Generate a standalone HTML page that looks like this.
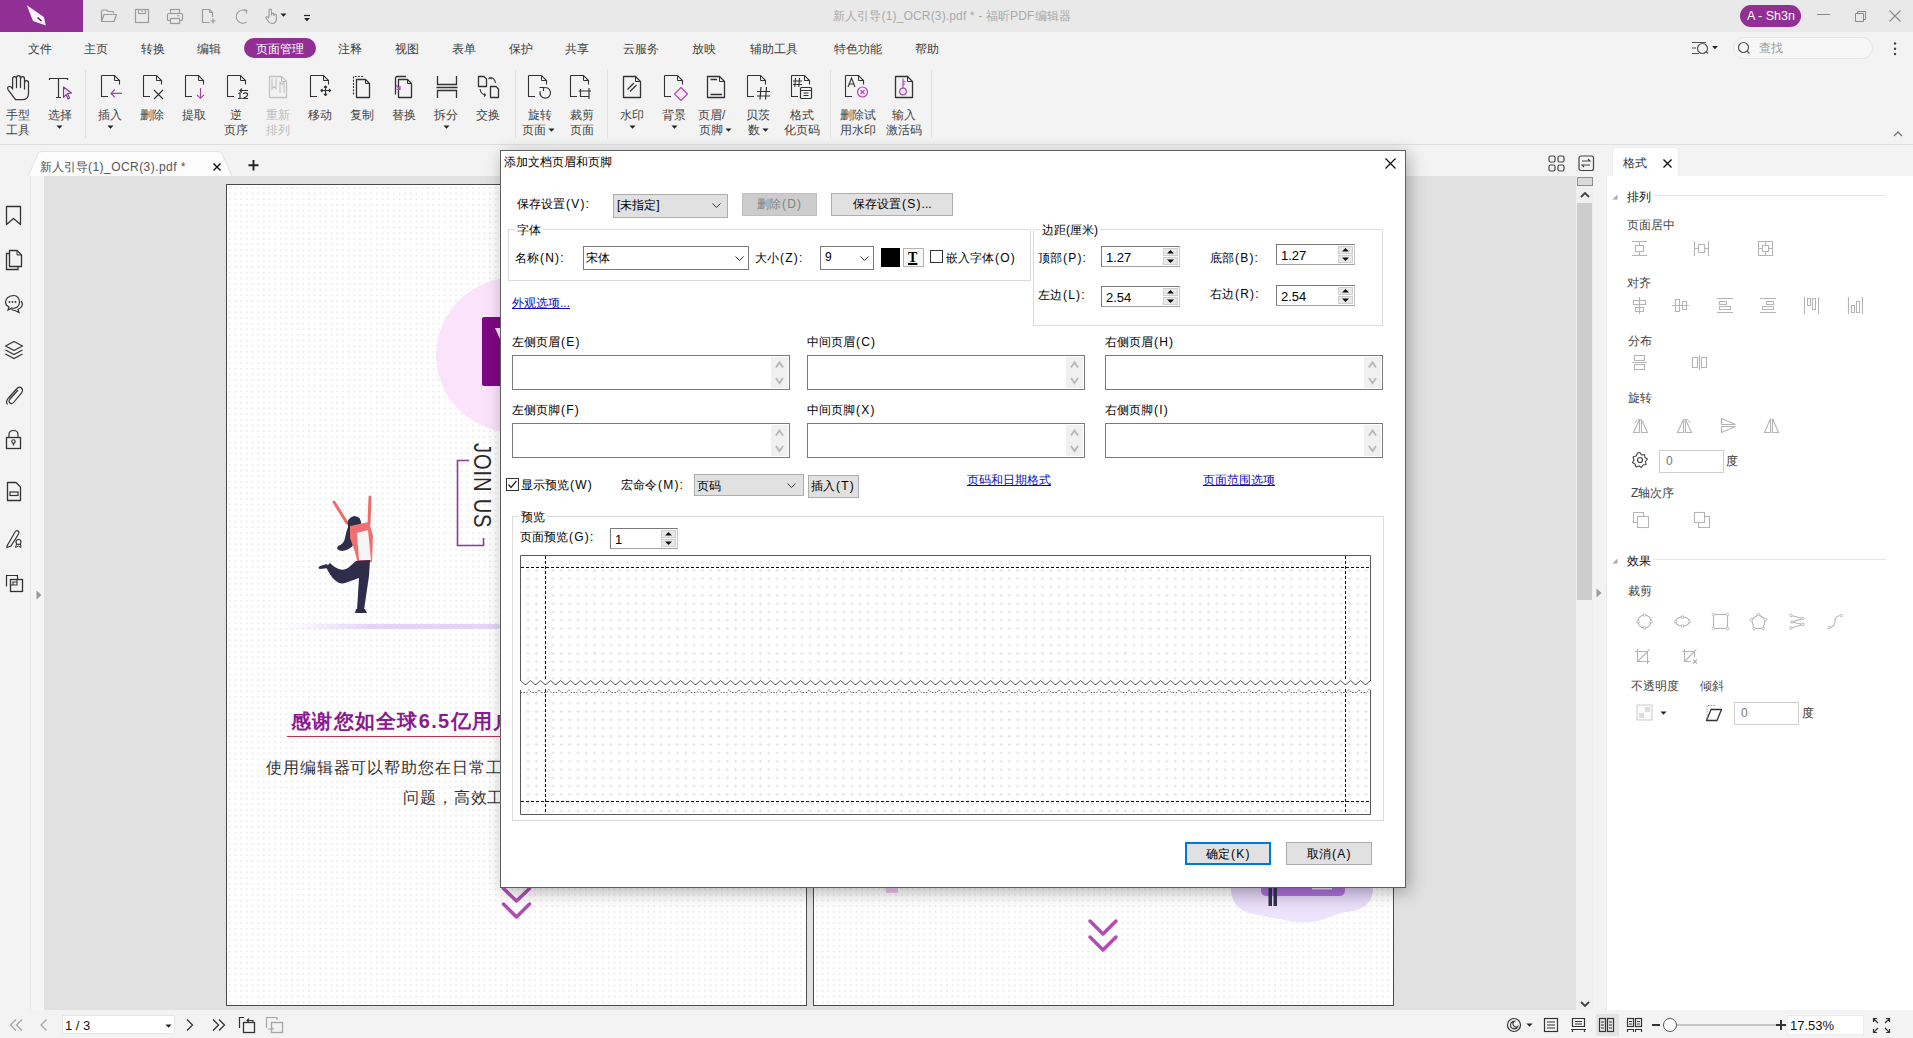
<!DOCTYPE html>
<html><head><meta charset="utf-8">
<style>
*{box-sizing:border-box;margin:0;padding:0}
html,body{width:1913px;height:1038px;overflow:hidden;background:#f3f3f3;font-family:"Liberation Sans",sans-serif;font-size:12px;color:#333}
.a{position:absolute}
.t{position:absolute;white-space:nowrap;line-height:1}
svg{position:absolute;overflow:visible}
</style></head><body>

<div class="a" style="left:0px;top:0px;width:1913px;height:32px;background:#e9e9e9"></div>
<div class="a" style="left:0px;top:0px;width:83px;height:32px;background:#922f94"></div>
<svg style="left:20px;top:0px" width="30" height="30" viewBox="0 0 30 30"><path d="M6.8 5.2L23.8 17L25.9 25.6L13 21Z" fill="#fff3fd"/><path d="M17.5 17.5L21.5 21" stroke="#5a1a5c" stroke-width="1.5"/></svg>
<svg style="left:100px;top:8px" width="18" height="16" viewBox="0 0 18 16"><path d="M1.5 13.5V3.5Q1.5 2 3 2H6.5L8 3.5H13.5V5.5 M1.5 13.5L4 6.5H16.5L14 13.5Z" stroke="#9b9b9b" stroke-width="1.2" fill="none" stroke-linejoin="round"/></svg>
<svg style="left:134px;top:8px" width="16" height="16" viewBox="0 0 16 16"><rect x="1.5" y="1.5" width="13" height="13" stroke="#9b9b9b" stroke-width="1.2" fill="none"/><rect x="4.5" y="1.5" width="7" height="4" stroke="#9b9b9b" stroke-width="1.1" fill="none"/><path d="M7 3.2h2" stroke="#9b9b9b"/></svg>
<svg style="left:166px;top:8px" width="18" height="17" viewBox="0 0 18 17"><rect x="4.5" y="1.5" width="9" height="4" stroke="#9b9b9b" stroke-width="1.2" fill="none"/><rect x="1.5" y="5.5" width="15" height="7" rx="1" stroke="#9b9b9b" stroke-width="1.2" fill="none"/><rect x="4.5" y="10.5" width="9" height="5" stroke="#9b9b9b" stroke-width="1.2" fill="#e9e9e9"/><path d="M11 7.8h2.5" stroke="#9b9b9b"/></svg>
<svg style="left:201px;top:8px" width="16" height="16" viewBox="0 0 16 16"><path d="M8.5 14.5H1.5V1.5H8.5L11.5 4.5V9" stroke="#9b9b9b" stroke-width="1.2" fill="none"/><path d="M8.5 1.5V4.5H11.5" stroke="#9b9b9b" stroke-width="1" fill="none"/><path d="M12 10.5v5M9.5 13h5" stroke="#9b9b9b" stroke-width="1.2"/></svg>
<svg style="left:234px;top:8px" width="16" height="16" viewBox="0 0 16 16"><path d="M12.5 14A6.5 6.5 0 1 1 12 3" stroke="#9b9b9b" stroke-width="1.2" fill="none"/><path d="M10 1.5L13 2.5L12 5.5" stroke="#9b9b9b" stroke-width="1.1" fill="none"/></svg>
<svg style="left:264px;top:7px" width="16" height="18" viewBox="0 0 16 18"><path d="M5 10V3.5Q5 2 6.3 2Q7.5 2 7.5 3.5V8.5M7.5 7.5Q7.5 6.3 8.7 6.3Q10 6.3 10 7.5V9M10 8Q10 7 11 7Q12.3 7 12.3 8.5V12Q12.3 16.5 8 16.5Q5.5 16.5 4 14L2 11Q1.7 10 2.5 9.7Q3.4 9.4 5 11" stroke="#9b9b9b" stroke-width="1.2" fill="none" stroke-linejoin="round"/></svg>
<svg style="left:280px;top:13px" width="7" height="4" viewBox="0 0 7 4"><path d="M0.5 0.5H6.5L3.5 3.8Z" fill="#222"/></svg>
<svg style="left:303px;top:14px" width="8" height="8" viewBox="0 0 8 8"><path d="M1 1.5H7" stroke="#222" stroke-width="1.2"/><path d="M1 4H7L4 7.3Z" fill="#222"/></svg>
<span class="t" style="left:833px;top:10px;color:#a9a9a9;letter-spacing:0.15px">新人引导(1)_OCR(3).pdf * - 福昕PDF编辑器</span>
<div class="a" style="left:1740px;top:5px;width:61px;height:22px;background:#922f94;border-radius:11px"></div>
<span class="t" style="left:1747px;top:10px;font-size:12.5px;color:#fff">A - Sh3n</span>
<svg style="left:1817px;top:14px" width="14" height="2" viewBox="0 0 14 2"><path d="M0 0.5H13" stroke="#8a8a8a" stroke-width="1"/></svg>
<svg style="left:1853px;top:9px" width="13" height="13" viewBox="0 0 13 13"><path d="M2.5 4.5h8v8h-8z M4.5 4.5V2.5h8v8h-2" stroke="#8a8a8a" stroke-width="1" fill="none"/></svg>
<svg style="left:1889px;top:10px" width="12" height="12" viewBox="0 0 12 12"><path d="M0.5 0.5L11.5 11.5M11.5 0.5L0.5 11.5" stroke="#8a8a8a" stroke-width="1.1"/></svg>
<div class="a" style="left:0px;top:32px;width:1913px;height:112px;background:#f3f3f3"></div>
<div class="a" style="left:244px;top:38px;width:72px;height:20px;background:#922f94;border-radius:10px"></div>
<span class="t" style="left:28px;top:43px;color:#404040">文件</span>
<span class="t" style="left:84px;top:43px;color:#404040">主页</span>
<span class="t" style="left:141px;top:43px;color:#404040">转换</span>
<span class="t" style="left:197px;top:43px;color:#404040">编辑</span>
<span class="t" style="left:256px;top:43px;color:#fff">页面管理</span>
<span class="t" style="left:338px;top:43px;color:#404040">注释</span>
<span class="t" style="left:395px;top:43px;color:#404040">视图</span>
<span class="t" style="left:452px;top:43px;color:#404040">表单</span>
<span class="t" style="left:509px;top:43px;color:#404040">保护</span>
<span class="t" style="left:565px;top:43px;color:#404040">共享</span>
<span class="t" style="left:623px;top:43px;color:#404040">云服务</span>
<span class="t" style="left:692px;top:43px;color:#404040">放映</span>
<span class="t" style="left:750px;top:43px;color:#404040">辅助工具</span>
<span class="t" style="left:834px;top:43px;color:#404040">特色功能</span>
<span class="t" style="left:915px;top:43px;color:#404040">帮助</span>
<svg style="left:1691px;top:41px" width="30" height="15" viewBox="0 0 30 15"><path d="M1 1.5h14M1 7h4M1 12.5h7" stroke="#555" stroke-width="1.1"/><circle cx="11.5" cy="7.5" r="5" stroke="#555" stroke-width="1.2" fill="none"/><path d="M15 10.5L17 12.5" stroke="#555" stroke-width="1.2"/><path d="M21 5h6l-3 3.3z" fill="#222"/></svg>
<div class="a" style="left:1733px;top:37px;width:140px;height:22px;background:#f7f7f7;border:1px solid #e6e6e6;border-radius:11px"></div>
<svg style="left:1737px;top:41px" width="14" height="14" viewBox="0 0 14 14"><circle cx="6.5" cy="6.5" r="5" stroke="#555" stroke-width="1.2" fill="none"/><path d="M10 10L12.5 12.5" stroke="#555" stroke-width="1.2"/></svg>
<span class="t" style="left:1759px;top:42px;color:#9a9a9a">查找</span>
<svg style="left:1893px;top:42px" width="4" height="14" viewBox="0 0 4 14"><circle cx="2" cy="1.5" r="1.2" fill="#444"/><circle cx="2" cy="6.8" r="1.2" fill="#444"/><circle cx="2" cy="12" r="1.2" fill="#444"/></svg>
<svg style="left:0px;top:68px" width="32" height="34" viewBox="0 0 32 34"><path d="M12.6 20.5V11Q12.6 8.5 14.55 8.5Q16.5 8.5 16.5 11V19.5 M16.5 10Q16.5 7.5 18.5 7.5Q20.5 7.5 20.5 10V19.5 M20.5 11Q20.5 8.5 22.5 8.5Q24.5 8.5 24.5 11V21 M24.5 15Q24.5 12.5 26.5 12.5Q28.5 12.5 28.5 15V25Q28.5 31.5 23 31.5H15.5L8 21.5Q7 19 9 18.5Q11 18 12.6 21" stroke="#333" stroke-width="1.25" fill="none" stroke-linejoin="round" stroke-linecap="round"/></svg>
<svg style="left:49px;top:76px" width="26" height="26" viewBox="0 0 26 26"><path d="M0.5 4V2.5H18.5V4 M9.5 2.5V21.5 M7 21.5H12" stroke="#333" stroke-width="1.2" fill="none"/><path d="M14.5 11V21.5L17 18.5L19 23L20.5 22L18.5 17.5L22.5 17Z" stroke="#7a3a86" stroke-width="1.1" fill="#f8e2fb" stroke-linejoin="round"/></svg>
<svg style="left:101px;top:75px" width="23" height="24" viewBox="0 0 23 24"><path d="M0.5 0.5H13.5L18.5 5.5V9.5" stroke="#333" stroke-width="1.1" fill="none"/><path d="M13.5 0.5V5.5H18.5" stroke="#333" stroke-width="1" fill="none"/><path d="M0.5 0.5V21.5H7" stroke="#333" stroke-width="1.1" fill="none"/><path d="M21 18.4H10.5M13.8 14.5L10 18.4L13.8 22.3" stroke="#a144a4" stroke-width="1.15" fill="none"/></svg>
<svg style="left:143px;top:75px" width="23" height="25" viewBox="0 0 23 25"><path d="M0.5 0.5H13.5L18.5 5.5V9.5" stroke="#333" stroke-width="1.1" fill="none"/><path d="M13.5 0.5V5.5H18.5" stroke="#333" stroke-width="1" fill="none"/><path d="M0.5 0.5V21.5H7" stroke="#333" stroke-width="1.1" fill="none"/><path d="M11 15L20 24M20 15L11 24" stroke="#333" stroke-width="1.15"/></svg>
<svg style="left:185px;top:75px" width="23" height="25" viewBox="0 0 23 25"><path d="M0.5 0.5H13.5L18.5 5.5V9.5" stroke="#333" stroke-width="1.1" fill="none"/><path d="M13.5 0.5V5.5H18.5" stroke="#333" stroke-width="1" fill="none"/><path d="M0.5 0.5V21.5H7" stroke="#333" stroke-width="1.1" fill="none"/><path d="M15.5 13V23.5M12 19.8L15.5 23.3L19 19.8" stroke="#a144a4" stroke-width="1.15" fill="none"/></svg>
<svg style="left:227px;top:75px" width="23" height="25" viewBox="0 0 23 25"><path d="M0.5 0.5H13.5L18.5 5.5V9.5" stroke="#333" stroke-width="1.1" fill="none"/><path d="M13.5 0.5V5.5H18.5" stroke="#333" stroke-width="1" fill="none"/><path d="M0.5 0.5V21.5H7" stroke="#333" stroke-width="1.1" fill="none"/><path d="M13 15.5H21M15 13.5L13 15.5L15 17.5 M11.3 18.6L13 17.8V23.5M11 23.5H14.5 M16.3 18.8Q17 17.8 18.6 17.8Q20.6 17.8 20.6 19.6Q20.6 20.7 18.8 22L16.3 23.5H21" stroke="#333" stroke-width="1.15" fill="none"/></svg>
<svg style="left:268px;top:75px" width="22" height="24" viewBox="0 0 22 24"><path d="M1.5 1.5H13.5L18.5 6.5V22.5H1.5Z" stroke="#c2c2c2" stroke-width="1.3" fill="none" stroke-linejoin="round"/><path d="M13.5 1.5V6.5H18.5" stroke="#c2c2c2" stroke-width="1" fill="none"/><path d="M4 3V14L6 11.5L8 14V3M12 18V7L14 9.5L16 7V18" stroke="#c2c2c2" stroke-width="1.1" fill="none"/></svg>
<svg style="left:310px;top:75px" width="24" height="24" viewBox="0 0 24 24"><path d="M0.5 0.5H13.5L18.5 5.5V9.5" stroke="#333" stroke-width="1.1" fill="none"/><path d="M13.5 0.5V5.5H18.5" stroke="#333" stroke-width="1" fill="none"/><path d="M0.5 0.5V21.5H7" stroke="#333" stroke-width="1.1" fill="none"/><path d="M15.5 11V20.5M11 15.5H20.5M14 12.5L15.5 11L17 12.5M14 19L15.5 20.5L17 19M12.5 14L11 15.5L12.5 17M19 14L20.5 15.5L19 17" stroke="#333" stroke-width="1.2" fill="none"/></svg>
<svg style="left:352px;top:75px" width="22" height="24" viewBox="0 0 22 24"><path d="M1.5 19.5V1.5H12" stroke="#333" stroke-width="1.1" fill="none" stroke-dasharray="2 1.2"/><path d="M4.5 4.5H13.5L17.5 8.5V22.5H4.5Z" stroke="#333" stroke-width="1.3" fill="#f3f3f3" stroke-linejoin="round"/><path d="M13.5 4.5V8.5H17.5" stroke="#333" fill="none"/></svg>
<svg style="left:394px;top:75px" width="22" height="24" viewBox="0 0 22 24"><path d="M1.5 19.5V3Q1.5 1.5 3 1.5H12" stroke="#333" stroke-width="1.3" fill="none"/><path d="M4.5 4.5H13.5L17.5 8.5V22.5H4.5Z" stroke="#333" stroke-width="1.3" fill="#f3f3f3" stroke-linejoin="round"/><path d="M13.5 4.5V8.5H17.5" stroke="#333" fill="none"/><path d="M2 10L6 14.5M6 11V14.5H2.5" stroke="#b04bb4" stroke-width="1.2" fill="none"/></svg>
<svg style="left:436px;top:75px" width="22" height="24" viewBox="0 0 22 24"><path d="M1.5 1V9.5H20.5V1M0.5 12.5H21.5M1.5 23V15.5H20.5V23" stroke="#333" stroke-width="1.3" fill="none"/></svg>
<svg style="left:477px;top:75px" width="24" height="24" viewBox="0 0 24 24"><path d="M1.5 1.5H7L9.5 4V11.5H1.5Z M13.5 11.5H19L21.5 14V22.5H13.5Z" stroke="#333" stroke-width="1.3" fill="none" stroke-linejoin="round"/><path d="M13 2.5Q17.5 2.5 18.5 8M11.5 4L13 2.5L14.5 4 M3 14Q4 19.5 8.5 20M7 18.5L8.5 20L7 21.5" stroke="#333" stroke-width="1.1" fill="none"/></svg>
<svg style="left:528px;top:75px" width="25" height="26" viewBox="0 0 25 26"><path d="M0.5 0.5H13.5L18.5 5.5V9.5" stroke="#333" stroke-width="1.1" fill="none"/><path d="M13.5 0.5V5.5H18.5" stroke="#333" stroke-width="1" fill="none"/><path d="M0.5 0.5V21.5H7" stroke="#333" stroke-width="1.1" fill="none"/><path d="M12.2 16.2A5.3 5.3 0 1 0 15 13" stroke="#333" stroke-width="1.15" fill="none"/><path d="M11.5 12.5H15.5V16" stroke="#333" stroke-width="1.1" fill="none"/></svg>
<svg style="left:570px;top:75px" width="25" height="26" viewBox="0 0 25 26"><path d="M0.5 0.5H13.5L18.5 5.5V9.5" stroke="#333" stroke-width="1.1" fill="none"/><path d="M13.5 0.5V5.5H18.5" stroke="#333" stroke-width="1" fill="none"/><path d="M0.5 0.5V21.5H7" stroke="#333" stroke-width="1.1" fill="none"/><path d="M8.5 16H21M19 13V24M10.5 14V21.5H19" stroke="#333" stroke-width="1.15" fill="none"/></svg>
<svg style="left:622px;top:75px" width="22" height="25" viewBox="0 0 22 25"><path d="M1.5 1.5H13.5L18.5 6.5V22.5H1.5Z" stroke="#333" stroke-width="1.3" fill="none" stroke-linejoin="round"/><path d="M13.5 1.5V6.5H18.5" stroke="#333" stroke-width="1" fill="none"/><path d="M5.5 14.5L12 8M8 16.5L14.5 10" stroke="#333" stroke-width="1.2"/></svg>
<svg style="left:664px;top:75px" width="26" height="27" viewBox="0 0 26 27"><path d="M0.5 0.5H13.5L18.5 5.5V9.5" stroke="#333" stroke-width="1.1" fill="none"/><path d="M13.5 0.5V5.5H18.5" stroke="#333" stroke-width="1" fill="none"/><path d="M0.5 0.5V21.5H7" stroke="#333" stroke-width="1.1" fill="none"/><path d="M17 12.5L23.5 19L17 25.5L10.5 19Z" stroke="#b04bb4" stroke-width="1.1" fill="#f8e6f9" stroke-linejoin="round"/></svg>
<svg style="left:706px;top:75px" width="22" height="24" viewBox="0 0 22 24"><path d="M1.5 1.5H13.5L18.5 6.5V22.5H1.5Z" stroke="#333" stroke-width="1.3" fill="none" stroke-linejoin="round"/><path d="M13.5 1.5V6.5H18.5" stroke="#333" stroke-width="1" fill="none"/><path d="M4.5 4.5H11M4.5 19.5H16" stroke="#333" stroke-width="1.4"/></svg>
<svg style="left:747px;top:75px" width="25" height="26" viewBox="0 0 25 26"><path d="M0.5 0.5H13.5L18.5 5.5V9.5" stroke="#333" stroke-width="1.1" fill="none"/><path d="M13.5 0.5V5.5H18.5" stroke="#333" stroke-width="1" fill="none"/><path d="M0.5 0.5V21.5H7" stroke="#333" stroke-width="1.1" fill="none"/><path d="M14 12L13 24.5M19.5 12L18.5 24.5M10 16.5H23M10 21H23" stroke="#333" stroke-width="1.2"/></svg>
<svg style="left:791px;top:75px" width="25" height="26" viewBox="0 0 25 26"><path d="M0.5 0.5H13.5L18.5 5.5V9.5" stroke="#333" stroke-width="1.1" fill="none"/><path d="M13.5 0.5V5.5H18.5" stroke="#333" stroke-width="1" fill="none"/><path d="M0.5 0.5V21.5H7" stroke="#333" stroke-width="1.1" fill="none"/><path d="M4.5 3L3.8 12M8.5 3L7.8 12M2 6H11M2 9.5H11" stroke="#333" stroke-width="1.1"/><rect x="9.5" y="12.5" width="11" height="11" rx="1" stroke="#333" stroke-width="1.2" fill="#f3f3f3"/><path d="M9.5 15.5H20.5M12.5 18H17.5M12.5 20.5H17.5" stroke="#333" stroke-width="1"/></svg>
<svg style="left:845px;top:75px" width="26" height="24" viewBox="0 0 26 24"><path d="M0.5 0.5H13.5L18.5 5.5V9.5" stroke="#333" stroke-width="1.1" fill="none"/><path d="M13.5 0.5V5.5H18.5" stroke="#333" stroke-width="1" fill="none"/><path d="M0.5 0.5V21.5H7" stroke="#333" stroke-width="1.1" fill="none"/><path d="M3 12L6.5 3L10 12M4.5 9H8.5" stroke="#333" stroke-width="1.1" fill="none"/><circle cx="17.5" cy="17" r="5" stroke="#b04bb4" stroke-width="1.2" fill="#f8e8f8"/><path d="M15.5 15L19.5 19M19.5 15L15.5 19" stroke="#b04bb4" stroke-width="1.1"/></svg>
<svg style="left:894px;top:75px" width="22" height="24" viewBox="0 0 22 24"><path d="M1.5 1.5H13.5L18.5 6.5V22.5H1.5Z" stroke="#333" stroke-width="1.3" fill="none" stroke-linejoin="round"/><path d="M13.5 1.5V6.5H18.5" stroke="#333" stroke-width="1" fill="none"/><circle cx="9" cy="16.5" r="3.3" stroke="#b04bb4" stroke-width="1.3" fill="none"/><path d="M9 13V3.5M9 6.5H11.5M9 9H11.5" stroke="#b04bb4" stroke-width="1.2"/></svg>
<span class="t" style="left:6px;top:109px;color:#444">手型</span>
<span class="t" style="left:6px;top:124px;color:#444">工具</span>
<span class="t" style="left:48px;top:109px;color:#444">选择</span>
<svg style="left:56px;top:125px" width="7" height="4" viewBox="0 0 7 4"><path d="M0.5 0.5H6.5L3.5 3.8Z" fill="#222"/></svg>
<span class="t" style="left:98px;top:109px;color:#444">插入</span>
<svg style="left:107px;top:125px" width="7" height="4" viewBox="0 0 7 4"><path d="M0.5 0.5H6.5L3.5 3.8Z" fill="#222"/></svg>
<span class="t" style="left:140px;top:109px;color:#444">删除</span>
<span class="t" style="left:182px;top:109px;color:#444">提取</span>
<span class="t" style="left:230px;top:109px;color:#444">逆</span>
<span class="t" style="left:224px;top:124px;color:#444">页序</span>
<span class="t" style="left:266px;top:109px;color:#bdbdbd">重新</span>
<span class="t" style="left:266px;top:124px;color:#bdbdbd">排列</span>
<span class="t" style="left:308px;top:109px;color:#444">移动</span>
<span class="t" style="left:350px;top:109px;color:#444">复制</span>
<span class="t" style="left:392px;top:109px;color:#444">替换</span>
<span class="t" style="left:434px;top:109px;color:#444">拆分</span>
<svg style="left:443px;top:125px" width="7" height="4" viewBox="0 0 7 4"><path d="M0.5 0.5H6.5L3.5 3.8Z" fill="#222"/></svg>
<span class="t" style="left:476px;top:109px;color:#444">交换</span>
<span class="t" style="left:528px;top:109px;color:#444">旋转</span>
<span class="t" style="left:522px;top:124px;color:#444">页面</span>
<svg style="left:548px;top:128px" width="7" height="4" viewBox="0 0 7 4"><path d="M0.5 0.5H6.5L3.5 3.8Z" fill="#222"/></svg>
<span class="t" style="left:570px;top:109px;color:#444">裁剪</span>
<span class="t" style="left:570px;top:124px;color:#444">页面</span>
<span class="t" style="left:620px;top:109px;color:#444">水印</span>
<svg style="left:629px;top:125px" width="7" height="4" viewBox="0 0 7 4"><path d="M0.5 0.5H6.5L3.5 3.8Z" fill="#222"/></svg>
<span class="t" style="left:662px;top:109px;color:#444">背景</span>
<svg style="left:671px;top:125px" width="7" height="4" viewBox="0 0 7 4"><path d="M0.5 0.5H6.5L3.5 3.8Z" fill="#222"/></svg>
<span class="t" style="left:698px;top:109px;color:#444">页眉/</span>
<span class="t" style="left:699px;top:124px;color:#444">页脚</span>
<svg style="left:725px;top:128px" width="7" height="4" viewBox="0 0 7 4"><path d="M0.5 0.5H6.5L3.5 3.8Z" fill="#222"/></svg>
<span class="t" style="left:746px;top:109px;color:#444">贝茨</span>
<span class="t" style="left:748px;top:124px;color:#444">数</span>
<svg style="left:762px;top:128px" width="7" height="4" viewBox="0 0 7 4"><path d="M0.5 0.5H6.5L3.5 3.8Z" fill="#222"/></svg>
<span class="t" style="left:790px;top:109px;color:#444">格式</span>
<span class="t" style="left:784px;top:124px;color:#444">化页码</span>
<span class="t" style="left:840px;top:109px;color:#444">删除试</span>
<span class="t" style="left:840px;top:124px;color:#444">用水印</span>
<span class="t" style="left:892px;top:109px;color:#444">输入</span>
<span class="t" style="left:886px;top:124px;color:#444">激活码</span>
<div class="a" style="left:85px;top:70px;width:1px;height:68px;background:#e2e2e2"></div>
<div class="a" style="left:515px;top:70px;width:1px;height:68px;background:#e2e2e2"></div>
<div class="a" style="left:607px;top:70px;width:1px;height:68px;background:#e2e2e2"></div>
<div class="a" style="left:830px;top:70px;width:1px;height:68px;background:#e2e2e2"></div>
<div class="a" style="left:931px;top:70px;width:1px;height:68px;background:#e2e2e2"></div>
<svg style="left:1893px;top:131px" width="10" height="6" viewBox="0 0 10 6"><path d="M1 5L5 1L9 5" stroke="#777" stroke-width="1.3" fill="none"/></svg>
<div class="a" style="left:0px;top:144px;width:1913px;height:1px;background:#dedede"></div>
<div class="a" style="left:0px;top:145px;width:1913px;height:31px;background:#f3f3f3"></div>
<svg style="left:28px;top:151px" width="206" height="26" viewBox="0 0 206 26"><path d="M0 25.5L10 2.5Q11 0.5 14 0.5H190Q193 0.5 194 2.5L204 25.5" stroke="#e3e3e3" fill="#fcfcfc"/></svg>
<span class="t" style="left:40px;top:161px;color:#555">新人引导<span style="letter-spacing:0.45px">(1)_OCR(3).pdf *</span></span>
<svg style="left:213px;top:163px" width="9" height="9" viewBox="0 0 9 9"><path d="M0.5 0.5L7.5 7.5M7.5 0.5L0.5 7.5" stroke="#111" stroke-width="1.4"/></svg>
<svg style="left:248px;top:160px" width="11" height="11" viewBox="0 0 11 11"><path d="M5.5 0V10.5M0.5 5.25H10.5" stroke="#222" stroke-width="1.9"/></svg>
<svg style="left:1548px;top:155px" width="17" height="17" viewBox="0 0 17 17"><rect x="1" y="1" width="6" height="6" rx="1.5" stroke="#444" stroke-width="1.2" fill="none"/><rect x="10" y="1" width="6" height="6" rx="1.5" stroke="#444" stroke-width="1.2" fill="none"/><rect x="1" y="10" width="6" height="6" rx="1.5" stroke="#444" stroke-width="1.2" fill="none"/><rect x="10" y="10" width="6" height="6" rx="1.5" stroke="#444" stroke-width="1.2" fill="none"/></svg>
<svg style="left:1578px;top:155px" width="17" height="17" viewBox="0 0 17 17"><rect x="1" y="1" width="14.5" height="14.5" rx="2" stroke="#444" stroke-width="1.2" fill="none"/><path d="M4 6H12L10 4M12 10H4L6 12" stroke="#444" stroke-width="1.1" fill="none"/></svg>
<svg style="left:1612px;top:147px" width="70" height="30" viewBox="0 0 70 30"><path d="M0.5 29.5V5Q0.5 0.5 5 0.5H62Q66.5 0.5 66.5 5V29.5" stroke="#ececec" fill="#fff"/></svg>
<span class="t" style="left:1623px;top:157px;color:#333">格式</span>
<svg style="left:1663px;top:159px" width="9" height="9" viewBox="0 0 9 9"><path d="M0.5 0.5L8.5 8.5M8.5 0.5L0.5 8.5" stroke="#111" stroke-width="1.4"/></svg>
<div class="a" style="left:0px;top:176px;width:31px;height:834px;background:#f3f3f3;border-right:1px solid #e6e6e6"></div>
<div class="a" style="left:31px;top:176px;width:13px;height:834px;background:#f5f5f5"></div>
<svg style="left:5px;top:205px" width="17" height="21" viewBox="0 0 17 21"><path d="M1.5 1.5H15.5V19.5L8.5 13.5L1.5 19.5Z" stroke="#333" stroke-width="1.3" fill="none" stroke-linejoin="round"/></svg>
<svg style="left:5px;top:249px" width="18" height="22" viewBox="0 0 18 22"><path d="M4.5 1.5H12L16.5 6V17.5H4.5Z" stroke="#333" stroke-width="1.3" fill="none" stroke-linejoin="round"/><path d="M12 1.5V6H16.5" stroke="#333" fill="none"/><path d="M4.5 4.5H1.5V20.5H13V17.5" stroke="#333" stroke-width="1.3" fill="none"/></svg>
<svg style="left:4px;top:294px" width="20" height="20" viewBox="0 0 20 20"><path d="M10 1.5C5 1.5 1.5 4.5 1.5 8C1.5 10.5 3 12 5 13L4 16L8 14C12 15 15.5 12.5 15.5 8C15.5 4.5 13 1.5 10 1.5Z" stroke="#333" stroke-width="1.2" fill="none"/><path d="M17 7Q19 9 18 12Q17 14 14 15.5L15 18.5L11 16.5Q9 16.5 7.5 15.5" stroke="#333" stroke-width="1.2" fill="none"/><circle cx="5.5" cy="8" r="0.9" fill="#333"/><circle cx="8.5" cy="8" r="0.9" fill="#333"/><circle cx="11.5" cy="8" r="0.9" fill="#333"/></svg>
<svg style="left:4px;top:340px" width="20" height="20" viewBox="0 0 20 20"><path d="M10 1.5L18.5 6L10 10.5L1.5 6Z" stroke="#333" stroke-width="1.2" fill="none" stroke-linejoin="round"/><path d="M1.5 10L10 14.5L18.5 10M1.5 14L10 18.5L18.5 14" stroke="#333" stroke-width="1.2" fill="none"/></svg>
<svg style="left:5px;top:385px" width="18" height="21" viewBox="0 0 18 21"><path d="M13 5L5 14Q3 16.5 5 18Q7 19.5 9 17L16.5 8Q18.5 5 16.5 3Q14 1 11.5 4L3 13.5Q0.5 17 2.5 19.5" stroke="#333" stroke-width="1.2" fill="none"/></svg>
<svg style="left:5px;top:429px" width="17" height="21" viewBox="0 0 17 21"><path d="M4 8.5V5.5Q4 1.5 8.5 1.5Q13 1.5 13 5.5V8.5" stroke="#333" stroke-width="1.2" fill="none"/><rect x="1.5" y="8.5" width="14" height="11" stroke="#333" stroke-width="1.3" fill="none"/><circle cx="8.5" cy="12.5" r="1.7" stroke="#333" stroke-width="1.1" fill="none"/><path d="M8.5 14V16.5" stroke="#333" stroke-width="1.3"/></svg>
<svg style="left:6px;top:481px" width="16" height="21" viewBox="0 0 16 21"><path d="M1.5 1.5H10L14.5 6V19.5H1.5Z" stroke="#333" stroke-width="1.3" fill="none" stroke-linejoin="round"/><rect x="4" y="11" width="8" height="3.5" stroke="#333" stroke-width="1.2" fill="none"/></svg>
<svg style="left:5px;top:529px" width="18" height="20" viewBox="0 0 18 20"><path d="M2 17L10 3Q11.5 1 13 2Q14.5 3 13.5 5L6 17L2 18.5Z" stroke="#333" stroke-width="1.2" fill="none"/><circle cx="13.5" cy="13" r="2.5" stroke="#333" stroke-width="1.1" fill="none"/><path d="M11.5 15L10.5 18.5L13.5 17L16 18.5L15.5 15" stroke="#333" stroke-width="1" fill="none"/></svg>
<svg style="left:5px;top:574px" width="19" height="20" viewBox="0 0 19 20"><path d="M1.5 12.5V1.5H12.5V5.5" stroke="#333" stroke-width="1.2" fill="none"/><rect x="5.5" y="5.5" width="12" height="12" stroke="#333" stroke-width="1.3" fill="#f3f3f3"/><path d="M8 8V11H12V8Z M5.5 11H12V5.5" stroke="#333" stroke-width="1.1" fill="none"/></svg>
<svg style="left:36px;top:590px" width="6" height="10" viewBox="0 0 6 10"><path d="M0.5 0.5V9.5L5.5 5Z" fill="#9a9a9a"/></svg>
<div class="a" style="left:44px;top:176px;width:1532px;height:834px;background:#e1e1e1"></div>
<div class="a" style="left:226px;top:184px;width:581px;height:822px;border:1px solid #4a4a4a;background-color:#fff;background-image:radial-gradient(circle,#ededed 1px,transparent 1.4px);background-size:5.67px 5.67px"></div>
<div class="a" style="left:813px;top:184px;width:581px;height:822px;border:1px solid #4a4a4a;background-color:#fff;background-image:radial-gradient(circle,#ededed 1px,transparent 1.4px);background-size:5.67px 5.67px"></div>
<div class="a" style="left:436px;top:277px;width:160px;height:156px;border-radius:50%;background:#fae3fb"></div>
<div class="a" style="left:482px;top:317px;width:40px;height:69px;background:#7d0882;border-radius:2px"></div>
<svg style="left:490px;top:325px" width="12" height="16" viewBox="0 0 12 16"><path d="M5 3L10 3L10 14Z" fill="#fbe8fb"/></svg>
<svg style="left:455px;top:438px" width="45" height="110" viewBox="0 0 45 110"><path d="M14 22.5H2.5V107.5H28.5V100" stroke="#8b3a9e" stroke-width="1.6" fill="none"/></svg>
<span class="t" style="left:494px;top:443px;font-size:24px;color:#2a2a2a;transform:rotate(90deg) scaleX(0.84);transform-origin:left top;letter-spacing:1px">JOIN US</span>
<svg style="left:300px;top:480px" width="90" height="140" viewBox="0 0 90 140"><path d="M34 22L47 43" stroke="#f06a6a" stroke-width="3" stroke-linecap="round"/><path d="M70 17L69 44" stroke="#f06a6a" stroke-width="3" stroke-linecap="round"/><path d="M48 47Q46 38 54 36Q62 36 61 46Q60 56 54 64Q50 70 42 71Q35 70 38 66Q44 64 45 58Q46 52 48 47Z" fill="#2f2d4a"/><path d="M50 46L69 42L73 56L72 82L58 84Q55 70 50 58Z" fill="#f06f6f"/><path d="M57 53L68 50L71 80L59 80Z" fill="#f5f5f5"/><path d="M56 81L70 80L69 96L64 130L57 130L59 98L45 103Q35 106 26 87L30 83Q40 93 48 88Z" fill="#2f2d4a"/><path d="M27 84L20 86Q17 88 20 89L29 88Z" fill="#2f2d4a"/><path d="M56 129L65 129L67 133L55 133Z" fill="#2f2d4a"/></svg>
<div class="a" style="left:285px;top:624px;width:215px;height:5px;background:linear-gradient(90deg,rgba(230,215,246,0),#e4d5f6 40%);border-radius:3px"></div>
<span class="t" style="left:291px;top:711px;font-size:20px;color:#8b1a8f;font-weight:bold;letter-spacing:1.3px">感谢您如全球6.5亿用户</span>
<div class="a" style="left:287px;top:736px;width:213px;height:1px;background:#c0304f"></div>
<span class="t" style="left:266px;top:760px;font-size:16px;color:#333;letter-spacing:0.9px">使用编辑器可以帮助您在日常工作</span>
<span class="t" style="left:403px;top:790px;font-size:16px;color:#333;letter-spacing:0.9px">问题，高效工作</span>
<svg style="left:501px;top:886px" width="30" height="34" viewBox="0 0 30 34"><path d="M2.5 2.5L15.5 15L28.5 2.5M2.5 18L15.5 31L28.5 18" stroke="#b14cb5" stroke-width="3.5" fill="none" stroke-linecap="round" stroke-linejoin="round"/></svg>
<svg style="left:1087px;top:918px" width="32" height="36" viewBox="0 0 32 36"><path d="M3 3L16 16L29 3M3 19L16 32L29 19" stroke="#b14cb5" stroke-width="3.5" fill="none" stroke-linecap="round" stroke-linejoin="round"/></svg>
<svg style="left:1228px;top:880px" width="150" height="50" viewBox="0 0 150 50"><defs><linearGradient id="cg" x1="0" y1="0" x2="0" y2="1"><stop offset="0" stop-color="#d9cbee"/><stop offset="0.6" stop-color="#eadffa"/><stop offset="1" stop-color="#efe6fc"/></linearGradient></defs><path d="M3 3Q1 26 20 33Q35 36 52 39Q76 46 97 39Q112 32 126 31Q142 27 145 12L145 3Z" fill="url(#cg)"/><path d="M33 3H117V10Q117 16 111 16H39Q33 16 33 10Z" fill="#ad70d8"/><path d="M40.5 5H44V26H40.5Z M45.5 5H49V26H45.5Z" fill="#2f3150"/><path d="M84 8.5H104" stroke="#efe3f7" stroke-width="2"/></svg>
<div class="a" style="left:886px;top:886px;width:12px;height:7px;background:#f0c6ee"></div>
<div class="a" style="left:1576px;top:176px;width:17px;height:834px;background:#f0f0f0"></div>
<div class="a" style="left:1577px;top:177px;width:16px;height:9px;background:#dadada;border:1px solid #8f8f8f"></div>
<svg style="left:1580px;top:191px" width="10" height="7" viewBox="0 0 10 7"><path d="M1 6L5 2L9 6" stroke="#444" stroke-width="1.9" fill="none"/></svg>
<div class="a" style="left:1577px;top:203px;width:15px;height:397px;background:#cdcdcd"></div>
<svg style="left:1580px;top:1001px" width="10" height="7" viewBox="0 0 10 7"><path d="M1 1L5 5L9 1" stroke="#444" stroke-width="1.9" fill="none"/></svg>
<div class="a" style="left:1593px;top:176px;width:14px;height:834px;background:#f3f3f3;border-right:1px solid #e8e8e8"></div>
<svg style="left:1596px;top:588px" width="6" height="10" viewBox="0 0 6 10"><path d="M0.5 0.5V9.5L5.5 5Z" fill="#9a9a9a"/></svg>
<div class="a" style="left:1607px;top:176px;width:306px;height:834px;background:#fff"></div>
<svg style="left:1612px;top:194px" width="6" height="6" viewBox="0 0 6 6"><path d="M5.5 0.5V5.5H0.5Z" fill="#aaa"/></svg>
<span class="t" style="left:1627px;top:191px;color:#111">排列</span>
<div class="a" style="left:1653px;top:195px;width:233px;height:1px;background:#e6e6e6"></div>
<span class="t" style="left:1627px;top:219px;color:#444">页面居中</span>
<svg style="left:1631px;top:240px" width="17" height="17" viewBox="0 0 17 17"><path d="M1 1.5H16M1 15.5H16M4.5 5.5H12.5V11.5H4.5Z M8.5 1.5V5.5M8.5 11.5V15.5" stroke="#b5b5b5" stroke-width="1.1" fill="none"/></svg>
<svg style="left:1693px;top:240px" width="17" height="17" viewBox="0 0 17 17"><path d="M1.5 1V16M15.5 1V16M5.5 4.5H11.5V12.5H5.5Z M1.5 8.5H5.5M11.5 8.5H15.5" stroke="#b5b5b5" stroke-width="1.1" fill="none"/></svg>
<svg style="left:1757px;top:240px" width="17" height="17" viewBox="0 0 17 17"><path d="M1.5 1.5H15.5V15.5H1.5Z M5.5 5.5H11.5V11.5H5.5Z M8.5 1.5V5.5M8.5 11.5V15.5M1.5 8.5H5.5M11.5 8.5H15.5" stroke="#b5b5b5" stroke-width="1.1" fill="none"/></svg>
<span class="t" style="left:1627px;top:277px;color:#444">对齐</span>
<svg style="left:1631px;top:297px" width="17" height="17" viewBox="0 0 17 17"><path d="M8.5 0V17M2.5 3.5H14.5V7.5H2.5Z M4.5 10.5H12.5V14.5H4.5Z" stroke="#b5b5b5" stroke-width="1.1" fill="#fff"/></svg>
<svg style="left:1672px;top:297px" width="17" height="17" viewBox="0 0 17 17"><path d="M0 8.5H17M3.5 2.5H7.5V14.5H3.5Z M10.5 4.5H14.5V12.5H10.5Z" stroke="#b5b5b5" stroke-width="1.1" fill="#fff"/></svg>
<svg style="left:1716px;top:297px" width="17" height="17" viewBox="0 0 17 17"><path d="M1 1.5H17M1 15.5H17M3.5 4.5H10.5V7.5H3.5Z M3.5 9.5H14.5V12.5H3.5Z" stroke="#b5b5b5" stroke-width="1.1" fill="none"/></svg>
<svg style="left:1760px;top:297px" width="17" height="17" viewBox="0 0 17 17"><path d="M0 1.5H16M0 15.5H16M6.5 4.5H13.5V7.5H6.5Z M2.5 9.5H13.5V12.5H2.5Z" stroke="#b5b5b5" stroke-width="1.1" fill="none"/></svg>
<svg style="left:1803px;top:297px" width="17" height="17" viewBox="0 0 17 17"><path d="M1.5 0V17M15.5 0V17M4.5 1.5H7.5V8.5H4.5Z M9.5 1.5H12.5V12.5H9.5Z" stroke="#b5b5b5" stroke-width="1.1" fill="none"/></svg>
<svg style="left:1847px;top:297px" width="17" height="17" viewBox="0 0 17 17"><path d="M1.5 0V17M15.5 0V17M4.5 8.5H7.5V15.5H4.5Z M9.5 4.5H12.5V15.5H9.5Z" stroke="#b5b5b5" stroke-width="1.1" fill="none"/></svg>
<span class="t" style="left:1628px;top:335px;color:#444">分布</span>
<svg style="left:1631px;top:354px" width="17" height="17" viewBox="0 0 17 17"><path d="M3.5 1.5H13.5V6.5H3.5Z M3.5 10.5H13.5V15.5H3.5Z M1 8.5H16" stroke="#b5b5b5" stroke-width="1.1" fill="none"/></svg>
<svg style="left:1691px;top:354px" width="18" height="17" viewBox="0 0 18 17"><path d="M1.5 3.5V13.5H6.5V3.5Z M10.5 3.5V13.5H15.5V3.5Z M8.5 1V16" stroke="#b5b5b5" stroke-width="1.1" fill="none"/></svg>
<span class="t" style="left:1628px;top:392px;color:#444">旋转</span>
<svg style="left:1632px;top:417px" width="17" height="17" viewBox="0 0 17 17"><path d="M1.5 15.5L7.5 2.5V15.5Z M9.5 2.5L15.5 15.5H9.5Z" stroke="#b5b5b5" stroke-width="1.1" fill="none"/><path d="M3 6Q5 1 9 3" stroke="#b5b5b5" fill="none"/></svg>
<svg style="left:1676px;top:417px" width="17" height="17" viewBox="0 0 17 17"><path d="M1.5 15.5L7.5 2.5V15.5Z M9.5 2.5L15.5 15.5H9.5Z" stroke="#b5b5b5" stroke-width="1.1" fill="none"/><path d="M14 6Q12 1 8 3" stroke="#b5b5b5" fill="none"/></svg>
<svg style="left:1720px;top:417px" width="17" height="17" viewBox="0 0 17 17"><path d="M1.5 1.5L15.5 7.5H1.5Z M1.5 9.5H15.5L1.5 15.5Z" stroke="#b5b5b5" stroke-width="1.1" fill="none"/></svg>
<svg style="left:1763px;top:417px" width="17" height="17" viewBox="0 0 17 17"><path d="M1.5 15.5L7.5 1.5V15.5Z M9.5 1.5L15.5 15.5H9.5Z" stroke="#b5b5b5" stroke-width="1.1" fill="none"/></svg>
<svg style="left:1631px;top:451px" width="18" height="18" viewBox="0 0 18 18"><circle cx="9" cy="9" r="2.5" stroke="#444" stroke-width="1.2" fill="none"/><path d="M9 1.5L10.5 4L13.5 3.5L14 6.5L16.5 8L14.5 10.5L15 13.5L12 14L10.5 16.5L8 15L5 16L4 13L1.5 11.5L3 9L2 6L5 5L6.5 2Z" stroke="#444" stroke-width="1.1" fill="none" stroke-linejoin="round"/></svg>
<div class="a" style="left:1659px;top:450px;width:65px;height:23px;background:#fff;border:1px solid #cfcfcf"></div>
<span class="t" style="left:1666px;top:455px;color:#777">0</span>
<span class="t" style="left:1726px;top:455px;color:#333">度</span>
<span class="t" style="left:1631px;top:487px;color:#444">Z轴次序</span>
<svg style="left:1632px;top:511px" width="18" height="18" viewBox="0 0 18 18"><path d="M1.5 1.5H11.5V5.5 M1.5 1.5V11.5H5.5" stroke="#b5b5b5" stroke-width="1.1" fill="none"/><rect x="5.5" y="5.5" width="11" height="11" stroke="#b5b5b5" stroke-width="1.1" fill="none"/></svg>
<svg style="left:1693px;top:511px" width="18" height="18" viewBox="0 0 18 18"><rect x="1.5" y="1.5" width="10" height="10" stroke="#b5b5b5" stroke-width="1.1" fill="none"/><path d="M11.5 5.5H16.5V16.5H5.5V11.5" stroke="#b5b5b5" stroke-width="1.1" fill="none"/></svg>
<svg style="left:1612px;top:558px" width="6" height="6" viewBox="0 0 6 6"><path d="M5.5 0.5V5.5H0.5Z" fill="#aaa"/></svg>
<span class="t" style="left:1627px;top:555px;color:#111">效果</span>
<div class="a" style="left:1653px;top:559px;width:233px;height:1px;background:#e6e6e6"></div>
<span class="t" style="left:1628px;top:585px;color:#444">裁剪</span>
<svg style="left:1636px;top:613px" width="17" height="17" viewBox="0 0 17 17"><circle cx="8.5" cy="8.5" r="6.5" stroke="#b5b5b5" stroke-width="1.1" fill="none"/><circle cx="8.5" cy="2" r="1.3" fill="#fff" stroke="#b5b5b5" stroke-width="0.9"/><circle cx="15" cy="8.5" r="1.3" fill="#fff" stroke="#b5b5b5" stroke-width="0.9"/><circle cx="8.5" cy="15" r="1.3" fill="#fff" stroke="#b5b5b5" stroke-width="0.9"/><circle cx="2" cy="8.5" r="1.3" fill="#fff" stroke="#b5b5b5" stroke-width="0.9"/></svg>
<svg style="left:1674px;top:613px" width="17" height="17" viewBox="0 0 17 17"><ellipse cx="8.5" cy="8.5" rx="7" ry="4.5" stroke="#b5b5b5" stroke-width="1.1" fill="none"/><circle cx="8.5" cy="4" r="1.3" fill="#fff" stroke="#b5b5b5" stroke-width="0.9"/><circle cx="15.5" cy="8.5" r="1.3" fill="#fff" stroke="#b5b5b5" stroke-width="0.9"/><circle cx="8.5" cy="13" r="1.3" fill="#fff" stroke="#b5b5b5" stroke-width="0.9"/><circle cx="1.5" cy="8.5" r="1.3" fill="#fff" stroke="#b5b5b5" stroke-width="0.9"/></svg>
<svg style="left:1712px;top:613px" width="17" height="17" viewBox="0 0 17 17"><rect x="1.5" y="1.5" width="14" height="14" stroke="#b5b5b5" stroke-width="1.1" fill="none"/><circle cx="1.5" cy="1.5" r="1.3" fill="#fff" stroke="#b5b5b5" stroke-width="0.9"/><circle cx="15.5" cy="1.5" r="1.3" fill="#fff" stroke="#b5b5b5" stroke-width="0.9"/><circle cx="15.5" cy="15.5" r="1.3" fill="#fff" stroke="#b5b5b5" stroke-width="0.9"/><circle cx="1.5" cy="15.5" r="1.3" fill="#fff" stroke="#b5b5b5" stroke-width="0.9"/></svg>
<svg style="left:1750px;top:613px" width="17" height="17" viewBox="0 0 17 17"><path d="M8.5 1.5L15.5 6.5L13 15.5H4L1.5 6.5Z" stroke="#b5b5b5" stroke-width="1.1" fill="none"/><circle cx="8.5" cy="1.5" r="1.3" fill="#fff" stroke="#b5b5b5" stroke-width="0.9"/><circle cx="15.5" cy="6.5" r="1.3" fill="#fff" stroke="#b5b5b5" stroke-width="0.9"/><circle cx="13" cy="15.5" r="1.3" fill="#fff" stroke="#b5b5b5" stroke-width="0.9"/><circle cx="4" cy="15.5" r="1.3" fill="#fff" stroke="#b5b5b5" stroke-width="0.9"/><circle cx="1.5" cy="6.5" r="1.3" fill="#fff" stroke="#b5b5b5" stroke-width="0.9"/></svg>
<svg style="left:1789px;top:613px" width="17" height="17" viewBox="0 0 17 17"><path d="M2 2.5L14 5.5L3 9L14 11.5L2 15" stroke="#b5b5b5" stroke-width="1.1" fill="none"/><circle cx="2" cy="2.5" r="1.3" fill="#fff" stroke="#b5b5b5" stroke-width="0.9"/><circle cx="14" cy="5.5" r="1.3" fill="#fff" stroke="#b5b5b5" stroke-width="0.9"/><circle cx="3" cy="9" r="1.3" fill="#fff" stroke="#b5b5b5" stroke-width="0.9"/><circle cx="14" cy="11.5" r="1.3" fill="#fff" stroke="#b5b5b5" stroke-width="0.9"/><circle cx="2" cy="15" r="1.3" fill="#fff" stroke="#b5b5b5" stroke-width="0.9"/></svg>
<svg style="left:1827px;top:613px" width="17" height="17" viewBox="0 0 17 17"><path d="M2 14.5Q8 14 8 8.5Q8 2.5 14.5 2.5" stroke="#b5b5b5" stroke-width="1.1" fill="none"/><circle cx="2" cy="14.5" r="1.3" fill="#fff" stroke="#b5b5b5" stroke-width="0.9"/><circle cx="14.5" cy="2.5" r="1.3" fill="#fff" stroke="#b5b5b5" stroke-width="0.9"/></svg>
<svg style="left:1634px;top:648px" width="18" height="17" viewBox="0 0 18 17"><path d="M3.5 1V13.5H16M1 3.5H13.5V16 M3.5 13.5L13.5 3.5 M15.5 1L13.5 3.5" stroke="#b5b5b5" stroke-width="1.1" fill="none"/></svg>
<svg style="left:1681px;top:648px" width="18" height="17" viewBox="0 0 18 17"><path d="M3.5 1V13.5H10M1 3.5H13.5V9 M3.5 13.5L13.5 3.5 M15.5 1L13.5 3.5 M12 11.5L16 15.5M16 11.5L12 15.5" stroke="#b5b5b5" stroke-width="1.1" fill="none"/></svg>
<span class="t" style="left:1631px;top:680px;color:#444">不透明度</span>
<span class="t" style="left:1700px;top:680px;color:#444">倾斜</span>
<svg style="left:1636px;top:704px" width="18" height="18" viewBox="0 0 18 18"><rect x="1" y="1" width="15" height="15" stroke="#ccc" fill="#fafafa"/><rect x="3" y="9" width="5" height="5" fill="#ddd"/><rect x="9" y="3" width="5" height="5" fill="#ddd"/></svg>
<svg style="left:1660px;top:711px" width="7" height="4" viewBox="0 0 7 4"><path d="M0.5 0.5H6.5L3.5 3.8Z" fill="#222"/></svg>
<svg style="left:1704px;top:703px" width="19" height="19" viewBox="0 0 19 19"><path d="M7 6.5H17.5L13 17.5H2.5Z" stroke="#333" stroke-width="1.3" fill="none" stroke-linejoin="round"/><path d="M3 15V2.5H12" stroke="#999" stroke-width="1" fill="none" stroke-dasharray="1.5 1.2"/></svg>
<div class="a" style="left:1734px;top:702px;width:65px;height:23px;background:#fff;border:1px solid #cfcfcf"></div>
<span class="t" style="left:1741px;top:707px;color:#777">0</span>
<span class="t" style="left:1802px;top:707px;color:#333">度</span>
<div class="a" style="left:0px;top:1010px;width:1913px;height:28px;background:#f3f3f3"></div>
<svg style="left:9px;top:1018px" width="15" height="14" viewBox="0 0 15 14"><path d="M7 1.5L1.5 7L7 12.5M13 1.5L7.5 7L13 12.5" stroke="#a5a5a5" stroke-width="1.3" fill="none"/></svg>
<svg style="left:39px;top:1018px" width="10" height="14" viewBox="0 0 10 14"><path d="M7.5 1.5L2 7L7.5 12.5" stroke="#a5a5a5" stroke-width="1.3" fill="none"/></svg>
<div class="a" style="left:62px;top:1015px;width:113px;height:19px;background:#fff;border:1px solid #e6e6e6"></div>
<span class="t" style="left:65px;top:1019px;font-size:13px;color:#111">1 / 3</span>
<svg style="left:165px;top:1024px" width="7" height="4" viewBox="0 0 7 4"><path d="M0.5 0.5H6.5L3.5 3.8Z" fill="#222"/></svg>
<svg style="left:185px;top:1018px" width="10" height="14" viewBox="0 0 10 14"><path d="M2 1.5L7.5 7L2 12.5" stroke="#333" stroke-width="1.3" fill="none"/></svg>
<svg style="left:211px;top:1018px" width="15" height="14" viewBox="0 0 15 14"><path d="M2 1.5L7.5 7L2 12.5M8 1.5L13.5 7L8 12.5" stroke="#333" stroke-width="1.3" fill="none"/></svg>
<svg style="left:238px;top:1016px" width="18" height="18" viewBox="0 0 18 18"><path d="M1.5 12V1.5H6" stroke="#333" stroke-width="1.2" fill="none"/><rect x="5.5" y="6.5" width="11" height="10" stroke="#333" stroke-width="1.3" fill="none"/><path d="M9 4.5H15V6M11 2.5L9 4.5L11 6.5" stroke="#333" stroke-width="1.1" fill="none"/></svg>
<svg style="left:265px;top:1016px" width="19" height="18" viewBox="0 0 19 18"><path d="M1.5 12V1.5H12V4" stroke="#a5a5a5" stroke-width="1.2" fill="none"/><rect x="6.5" y="6.5" width="11" height="10" stroke="#a5a5a5" stroke-width="1.3" fill="none"/><path d="M3 13H9L7.5 11.5" stroke="#a5a5a5" fill="none"/></svg>
<svg style="left:1506px;top:1017px" width="16" height="16" viewBox="0 0 16 16"><circle cx="8" cy="8" r="6.5" stroke="#333" stroke-width="1.2" fill="none"/><path d="M8.5 4.2A3.8 3.8 0 1 0 11.8 9.5A3 3 0 0 1 8.5 4.2Z" stroke="#333" stroke-width="1.1" fill="none"/></svg>
<svg style="left:1526px;top:1023px" width="7" height="4" viewBox="0 0 7 4"><path d="M0.5 0.5H6.5L3.5 3.8Z" fill="#222"/></svg>
<svg style="left:1543px;top:1017px" width="16" height="16" viewBox="0 0 16 16"><rect x="1.5" y="1.5" width="13" height="13" stroke="#333" stroke-width="1.2" fill="none"/><path d="M4 5H12M4 8H12M4 11H12" stroke="#333"/></svg>
<svg style="left:1570px;top:1017px" width="17" height="16" viewBox="0 0 17 16"><path d="M2.5 1.5H14.5V9.5H2.5Z M1 12.5H16M2.5 15V12.5M14.5 15V12.5M5 4.5H12M5 7H12" stroke="#333" stroke-width="1.2" fill="none"/></svg>
<div class="a" style="left:1596px;top:1014px;width:23px;height:22px;background:#e4e4e4"></div>
<svg style="left:1598px;top:1017px" width="17" height="16" viewBox="0 0 17 16"><rect x="1.5" y="1.5" width="6" height="13" stroke="#333" stroke-width="1.2" fill="none"/><rect x="9.5" y="1.5" width="6" height="13" stroke="#333" stroke-width="1.2" fill="none"/><path d="M3 5H6M3 8H6M3 11H6M11 5H14M11 8H14M11 11H14" stroke="#333"/></svg>
<svg style="left:1626px;top:1017px" width="17" height="16" viewBox="0 0 17 16"><rect x="1.5" y="1.5" width="6" height="8" stroke="#333" stroke-width="1.2" fill="none"/><rect x="9.5" y="1.5" width="6" height="8" stroke="#333" stroke-width="1.2" fill="none"/><path d="M1.5 15V12.5H7.5V15M9.5 15V12.5H15.5V15M3 4.5H6M3 7H6M11 4.5H14M11 7H14" stroke="#333" stroke-width="1.1" fill="none"/></svg>
<svg style="left:1651px;top:1021px" width="10" height="8" viewBox="0 0 10 8"><path d="M1 4H9" stroke="#333" stroke-width="2"/></svg>
<div class="a" style="left:1665px;top:1024px;width:111px;height:2px;background:#c6c6c6"></div>
<div class="a" style="left:1663px;top:1018px;width:14px;height:14px;border-radius:50%;background:#fff;border:1.3px solid #555"></div>
<svg style="left:1775px;top:1019px" width="12" height="12" viewBox="0 0 12 12"><path d="M6 1V11M1 6H11" stroke="#333" stroke-width="2"/></svg>
<div class="a" style="left:1787px;top:1015px;width:77px;height:20px;background:#fff;border:1px solid #ececec"></div>
<span class="t" style="left:1790px;top:1019px;font-size:13px;color:#111">17.53%</span>
<svg style="left:1872px;top:1017px" width="19" height="17" viewBox="0 0 19 17"><path d="M1.5 5V1.5H5M1.5 1.5L6 6M17.5 5V1.5H14M17.5 1.5L13 6M1.5 12V15.5H5M1.5 15.5L6 11M17.5 12V15.5H14M17.5 15.5L13 11" stroke="#333" stroke-width="1.2" fill="none"/></svg>
<!-- DIALOG -->
<div class="a" style="left:500px;top:150px;width:906px;height:738px;background:#fff;border:1px solid #5f5f5f;box-shadow:3px 4px 16px rgba(0,0,0,.30)"></div>
<div id="dlg" style="font-size:12px;color:#000">
<span class="t" style="left:504px;top:156px">添加文档页眉和页脚</span>
<svg style="left:1385px;top:158px" width="11" height="11"><path d="M0.5 0.5L10.5 10.5M10.5 0.5L0.5 10.5" stroke="#000" stroke-width="1.1"/></svg>

<span class="t" style="left:517px;top:198px">保存设置<span style="letter-spacing:1.2px;margin-left:1px">(V):</span></span>
<div class="a" style="left:613px;top:194px;width:115px;height:24px;background:#e1e1e1;border:1px solid #adadad"></div>
<span class="t" style="left:617px;top:199px">[未指定]</span>
<svg style="left:712px;top:203px" width="10" height="6"><path d="M0.5 0.5L4.5 4.5L8.5 0.5" stroke="#333" fill="none"/></svg>

<div class="a" style="left:742px;top:193px;width:75px;height:23px;background:#cccccc;border:1px solid #bfbfbf"></div>
<span class="t" style="left:757px;top:198px;color:#838383">删除<span style="letter-spacing:1.2px;margin-left:1px">(D)</span></span>
<div class="a" style="left:831px;top:193px;width:122px;height:23px;background:#e1e1e1;border:1px solid #adadad"></div>
<span class="t" style="left:853px;top:198px">保存设置<span style="letter-spacing:1.2px;margin-left:1px">(S)</span>...</span>

<!-- font group -->
<div class="a" style="left:508px;top:229px;width:523px;height:52px;border:1px solid #dcdcdc"></div>
<span class="t" style="left:515px;top:224px;background:#fff;padding:0 2px">字体</span>
<span class="t" style="left:515px;top:252px">名称<span style="letter-spacing:1.2px;margin-left:1px">(N):</span></span>
<div class="a" style="left:583px;top:246px;width:166px;height:24px;background:#fff;border:1px solid #7a7a7a"></div>
<span class="t" style="left:586px;top:252px">宋体</span>
<svg style="left:735px;top:256px" width="10" height="6"><path d="M0.5 0.5L4.5 4.5L8.5 0.5" stroke="#333" fill="none"/></svg>
<span class="t" style="left:755px;top:252px">大小<span style="letter-spacing:1.2px;margin-left:1px">(Z):</span></span>
<div class="a" style="left:820px;top:246px;width:54px;height:24px;background:#fff;border:1px solid #7a7a7a"></div>
<span class="t" style="left:825px;top:251px">9</span>
<svg style="left:860px;top:256px" width="10" height="6"><path d="M0.5 0.5L4.5 4.5L8.5 0.5" stroke="#333" fill="none"/></svg>
<div class="a" style="left:881px;top:248px;width:19px;height:19px;background:#000"></div>
<div class="a" style="left:903px;top:248px;width:21px;height:19px;background:#f7f7f7;border:1px solid #b4b4b4"></div>
<span class="t" style="left:908px;top:251px;font-family:'Liberation Serif',serif;font-weight:bold;font-size:14px;text-decoration:underline;text-decoration-thickness:1.5px">T</span>
<div class="a" style="left:930px;top:250px;width:13px;height:13px;background:#fff;border:1px solid #333"></div>
<span class="t" style="left:946px;top:252px">嵌入字体<span style="letter-spacing:1.2px;margin-left:1px">(O)</span></span>

<span class="t" style="left:512px;top:297px;color:#0c0cb4;text-decoration:underline">外观选项...</span>

<!-- margin group -->
<div class="a" style="left:1033px;top:229px;width:350px;height:97px;border:1px solid #dcdcdc"></div>
<span class="t" style="left:1040px;top:224px;background:#fff;padding:0 2px">边距(厘米)</span>
<span class="t" style="left:1038px;top:252px">顶部<span style="letter-spacing:1.2px;margin-left:1px">(P):</span></span>
<span class="t" style="left:1038px;top:289px">左边<span style="letter-spacing:1.2px;margin-left:1px">(L):</span></span>
<span class="t" style="left:1210px;top:252px">底部<span style="letter-spacing:1.2px;margin-left:1px">(B):</span></span>
<span class="t" style="left:1210px;top:288px">右边<span style="letter-spacing:1.2px;margin-left:1px">(R):</span></span>
<div class="a" style="left:1101px;top:246px;width:79px;height:21px;background:#fff;border:1px solid #7a7a7a;border-right-color:#c8c8c8;border-bottom-color:#a0a0a0"></div>
<span class="t" style="left:1106px;top:251px;font-size:13px">1.27</span>
<div class="a" style="left:1163px;top:248px;width:15px;height:8px;background:#e8e8e8;border:1px solid #cfcfcf"></div>
<div class="a" style="left:1163px;top:257px;width:15px;height:8px;background:#e8e8e8;border:1px solid #cfcfcf"></div>
<svg style="left:0;top:0" width="1" height="1"><path d="M1167.0 253.5L1174.0 253.5L1170.5 250Z M1167.0 259.5L1174.0 259.5L1170.5 263Z" fill="#111"/></svg>
<div class="a" style="left:1101px;top:286px;width:79px;height:21px;background:#fff;border:1px solid #7a7a7a;border-right-color:#c8c8c8;border-bottom-color:#a0a0a0"></div>
<span class="t" style="left:1106px;top:291px;font-size:13px">2.54</span>
<div class="a" style="left:1163px;top:288px;width:15px;height:8px;background:#e8e8e8;border:1px solid #cfcfcf"></div>
<div class="a" style="left:1163px;top:297px;width:15px;height:8px;background:#e8e8e8;border:1px solid #cfcfcf"></div>
<svg style="left:0;top:0" width="1" height="1"><path d="M1167.0 293.5L1174.0 293.5L1170.5 290Z M1167.0 299.5L1174.0 299.5L1170.5 303Z" fill="#111"/></svg>
<div class="a" style="left:1276px;top:244px;width:79px;height:21px;background:#fff;border:1px solid #7a7a7a;border-right-color:#c8c8c8;border-bottom-color:#a0a0a0"></div>
<span class="t" style="left:1281px;top:249px;font-size:13px">1.27</span>
<div class="a" style="left:1338px;top:246px;width:15px;height:8px;background:#e8e8e8;border:1px solid #cfcfcf"></div>
<div class="a" style="left:1338px;top:255px;width:15px;height:8px;background:#e8e8e8;border:1px solid #cfcfcf"></div>
<svg style="left:0;top:0" width="1" height="1"><path d="M1342.0 251.5L1349.0 251.5L1345.5 248Z M1342.0 257.5L1349.0 257.5L1345.5 261Z" fill="#111"/></svg>
<div class="a" style="left:1276px;top:285px;width:79px;height:21px;background:#fff;border:1px solid #7a7a7a;border-right-color:#c8c8c8;border-bottom-color:#a0a0a0"></div>
<span class="t" style="left:1281px;top:290px;font-size:13px">2.54</span>
<div class="a" style="left:1338px;top:287px;width:15px;height:8px;background:#e8e8e8;border:1px solid #cfcfcf"></div>
<div class="a" style="left:1338px;top:296px;width:15px;height:8px;background:#e8e8e8;border:1px solid #cfcfcf"></div>
<svg style="left:0;top:0" width="1" height="1"><path d="M1342.0 292.5L1349.0 292.5L1345.5 289Z M1342.0 298.5L1349.0 298.5L1345.5 302Z" fill="#111"/></svg>


<!-- header/footer -->
<span class="t" style="left:512px;top:336px">左侧页眉<span style="letter-spacing:1.2px;margin-left:1px">(E)</span></span>
<span class="t" style="left:807px;top:336px">中间页眉<span style="letter-spacing:1.2px;margin-left:1px">(C)</span></span>
<span class="t" style="left:1105px;top:336px">右侧页眉<span style="letter-spacing:1.2px;margin-left:1px">(H)</span></span>
<span class="t" style="left:512px;top:404px">左侧页脚<span style="letter-spacing:1.2px;margin-left:1px">(F)</span></span>
<span class="t" style="left:807px;top:404px">中间页脚<span style="letter-spacing:1.2px;margin-left:1px">(X)</span></span>
<span class="t" style="left:1105px;top:404px">右侧页脚<span style="letter-spacing:1.2px;margin-left:1px">(I)</span></span>
<div class="a" style="left:512px;top:355px;width:278px;height:35px;background:#fff;border:1px solid #7a7a7a"></div>
<div class="a" style="left:771px;top:357px;width:17px;height:31px;background:#f0f0f0"></div>
<svg style="left:0;top:0" width="1" height="1"><path d="M776.0 367.5L779.5 362.5L783.0 367.5 M776.0 378.0L779.5 383.0L783.0 378.0" stroke="#b8b8b8" stroke-width="1.9" fill="none"/></svg>
<div class="a" style="left:807px;top:355px;width:278px;height:35px;background:#fff;border:1px solid #7a7a7a"></div>
<div class="a" style="left:1066px;top:357px;width:17px;height:31px;background:#f0f0f0"></div>
<svg style="left:0;top:0" width="1" height="1"><path d="M1071.0 367.5L1074.5 362.5L1078.0 367.5 M1071.0 378.0L1074.5 383.0L1078.0 378.0" stroke="#b8b8b8" stroke-width="1.9" fill="none"/></svg>
<div class="a" style="left:1105px;top:355px;width:278px;height:35px;background:#fff;border:1px solid #7a7a7a"></div>
<div class="a" style="left:1364px;top:357px;width:17px;height:31px;background:#f0f0f0"></div>
<svg style="left:0;top:0" width="1" height="1"><path d="M1369.0 367.5L1372.5 362.5L1376.0 367.5 M1369.0 378.0L1372.5 383.0L1376.0 378.0" stroke="#b8b8b8" stroke-width="1.9" fill="none"/></svg>
<div class="a" style="left:512px;top:423px;width:278px;height:35px;background:#fff;border:1px solid #7a7a7a"></div>
<div class="a" style="left:771px;top:425px;width:17px;height:31px;background:#f0f0f0"></div>
<svg style="left:0;top:0" width="1" height="1"><path d="M776.0 435.5L779.5 430.5L783.0 435.5 M776.0 446.0L779.5 451.0L783.0 446.0" stroke="#b8b8b8" stroke-width="1.9" fill="none"/></svg>
<div class="a" style="left:807px;top:423px;width:278px;height:35px;background:#fff;border:1px solid #7a7a7a"></div>
<div class="a" style="left:1066px;top:425px;width:17px;height:31px;background:#f0f0f0"></div>
<svg style="left:0;top:0" width="1" height="1"><path d="M1071.0 435.5L1074.5 430.5L1078.0 435.5 M1071.0 446.0L1074.5 451.0L1078.0 446.0" stroke="#b8b8b8" stroke-width="1.9" fill="none"/></svg>
<div class="a" style="left:1105px;top:423px;width:278px;height:35px;background:#fff;border:1px solid #7a7a7a"></div>
<div class="a" style="left:1364px;top:425px;width:17px;height:31px;background:#f0f0f0"></div>
<svg style="left:0;top:0" width="1" height="1"><path d="M1369.0 435.5L1372.5 430.5L1376.0 435.5 M1369.0 446.0L1372.5 451.0L1376.0 446.0" stroke="#b8b8b8" stroke-width="1.9" fill="none"/></svg>


<div class="a" style="left:506px;top:478px;width:13px;height:13px;background:#fff;border:1px solid #333"></div>
<svg style="left:506px;top:478px" width="13" height="13"><path d="M2.5 6.5L5 9.5L10.5 3" stroke="#222" stroke-width="1.2" fill="none"/></svg>
<span class="t" style="left:521px;top:479px">显示预览<span style="letter-spacing:1.2px;margin-left:1px">(W)</span></span>
<span class="t" style="left:621px;top:479px">宏命令<span style="letter-spacing:1.2px;margin-left:1px">(M):</span></span>
<div class="a" style="left:694px;top:474px;width:110px;height:22px;background:#e1e1e1;border:1px solid #adadad"></div>
<span class="t" style="left:697px;top:480px">页码</span>
<svg style="left:787px;top:483px" width="10" height="6"><path d="M0.5 0.5L4.5 4.5L8.5 0.5" stroke="#333" fill="none"/></svg>
<div class="a" style="left:808px;top:475px;width:51px;height:23px;background:#e1e1e1;border:1px solid #adadad"></div>
<span class="t" style="left:811px;top:480px">插入<span style="letter-spacing:1.2px;margin-left:1px">(T)</span></span>
<span class="t" style="left:967px;top:474px;color:#0c0cb4;text-decoration:underline">页码和日期格式</span>
<span class="t" style="left:1203px;top:474px;color:#0c0cb4;text-decoration:underline">页面范围选项</span>

<!-- preview group -->
<div class="a" style="left:512px;top:516px;width:872px;height:305px;border:1px solid #dcdcdc"></div>
<span class="t" style="left:519px;top:511px;background:#fff;padding:0 2px">预览</span>
<span class="t" style="left:520px;top:531px">页面预览<span style="letter-spacing:1.2px;margin-left:1px">(G):</span></span>
<div class="a" style="left:610px;top:528px;width:68px;height:21px;background:#fff;border:1px solid #7a7a7a;border-right-color:#c8c8c8;border-bottom-color:#a0a0a0"></div>
<span class="t" style="left:615px;top:533px;font-size:13px">1</span>
<div class="a" style="left:661px;top:530px;width:15px;height:8px;background:#e8e8e8;border:1px solid #cfcfcf"></div>
<div class="a" style="left:661px;top:539px;width:15px;height:8px;background:#e8e8e8;border:1px solid #cfcfcf"></div>
<svg style="left:0;top:0" width="1" height="1"><path d="M665.0 535.5L672.0 535.5L668.5 532Z M665.0 541.5L672.0 541.5L668.5 545Z" fill="#111"/></svg>

<div class="a" style="left:520px;top:555px;width:851px;height:260px;background-color:#fff;background-image:radial-gradient(circle,#e4e4e4 0.9px,transparent 1.5px);background-size:8.3px 8.3px;background-position:4px 3px"></div>
<svg style="left:0;top:0" width="1" height="1"><path d="M520.5 681V555.5H1370.5V681 M520.5 689V814.5H1370.5V689" stroke="#5a5a5a" stroke-width="1" fill="none"/></svg>
<div class="a" style="left:520px;top:681px;width:852px;height:9px;background:#fff"></div>
<svg style="left:0;top:0" width="1" height="1"><path d="M520.5 680.5L525.0 684.5L526.0 684.5L530.5 680.5L535.0 684.5L536.0 684.5L540.5 680.5L545.0 684.5L546.0 684.5L550.5 680.5L555.0 684.5L556.0 684.5L560.5 680.5L565.0 684.5L566.0 684.5L570.5 680.5L575.0 684.5L576.0 684.5L580.5 680.5L585.0 684.5L586.0 684.5L590.5 680.5L595.0 684.5L596.0 684.5L600.5 680.5L605.0 684.5L606.0 684.5L610.5 680.5L615.0 684.5L616.0 684.5L620.5 680.5L625.0 684.5L626.0 684.5L630.5 680.5L635.0 684.5L636.0 684.5L640.5 680.5L645.0 684.5L646.0 684.5L650.5 680.5L655.0 684.5L656.0 684.5L660.5 680.5L665.0 684.5L666.0 684.5L670.5 680.5L675.0 684.5L676.0 684.5L680.5 680.5L685.0 684.5L686.0 684.5L690.5 680.5L695.0 684.5L696.0 684.5L700.5 680.5L705.0 684.5L706.0 684.5L710.5 680.5L715.0 684.5L716.0 684.5L720.5 680.5L725.0 684.5L726.0 684.5L730.5 680.5L735.0 684.5L736.0 684.5L740.5 680.5L745.0 684.5L746.0 684.5L750.5 680.5L755.0 684.5L756.0 684.5L760.5 680.5L765.0 684.5L766.0 684.5L770.5 680.5L775.0 684.5L776.0 684.5L780.5 680.5L785.0 684.5L786.0 684.5L790.5 680.5L795.0 684.5L796.0 684.5L800.5 680.5L805.0 684.5L806.0 684.5L810.5 680.5L815.0 684.5L816.0 684.5L820.5 680.5L825.0 684.5L826.0 684.5L830.5 680.5L835.0 684.5L836.0 684.5L840.5 680.5L845.0 684.5L846.0 684.5L850.5 680.5L855.0 684.5L856.0 684.5L860.5 680.5L865.0 684.5L866.0 684.5L870.5 680.5L875.0 684.5L876.0 684.5L880.5 680.5L885.0 684.5L886.0 684.5L890.5 680.5L895.0 684.5L896.0 684.5L900.5 680.5L905.0 684.5L906.0 684.5L910.5 680.5L915.0 684.5L916.0 684.5L920.5 680.5L925.0 684.5L926.0 684.5L930.5 680.5L935.0 684.5L936.0 684.5L940.5 680.5L945.0 684.5L946.0 684.5L950.5 680.5L955.0 684.5L956.0 684.5L960.5 680.5L965.0 684.5L966.0 684.5L970.5 680.5L975.0 684.5L976.0 684.5L980.5 680.5L985.0 684.5L986.0 684.5L990.5 680.5L995.0 684.5L996.0 684.5L1000.5 680.5L1005.0 684.5L1006.0 684.5L1010.5 680.5L1015.0 684.5L1016.0 684.5L1020.5 680.5L1025.0 684.5L1026.0 684.5L1030.5 680.5L1035.0 684.5L1036.0 684.5L1040.5 680.5L1045.0 684.5L1046.0 684.5L1050.5 680.5L1055.0 684.5L1056.0 684.5L1060.5 680.5L1065.0 684.5L1066.0 684.5L1070.5 680.5L1075.0 684.5L1076.0 684.5L1080.5 680.5L1085.0 684.5L1086.0 684.5L1090.5 680.5L1095.0 684.5L1096.0 684.5L1100.5 680.5L1105.0 684.5L1106.0 684.5L1110.5 680.5L1115.0 684.5L1116.0 684.5L1120.5 680.5L1125.0 684.5L1126.0 684.5L1130.5 680.5L1135.0 684.5L1136.0 684.5L1140.5 680.5L1145.0 684.5L1146.0 684.5L1150.5 680.5L1155.0 684.5L1156.0 684.5L1160.5 680.5L1165.0 684.5L1166.0 684.5L1170.5 680.5L1175.0 684.5L1176.0 684.5L1180.5 680.5L1185.0 684.5L1186.0 684.5L1190.5 680.5L1195.0 684.5L1196.0 684.5L1200.5 680.5L1205.0 684.5L1206.0 684.5L1210.5 680.5L1215.0 684.5L1216.0 684.5L1220.5 680.5L1225.0 684.5L1226.0 684.5L1230.5 680.5L1235.0 684.5L1236.0 684.5L1240.5 680.5L1245.0 684.5L1246.0 684.5L1250.5 680.5L1255.0 684.5L1256.0 684.5L1260.5 680.5L1265.0 684.5L1266.0 684.5L1270.5 680.5L1275.0 684.5L1276.0 684.5L1280.5 680.5L1285.0 684.5L1286.0 684.5L1290.5 680.5L1295.0 684.5L1296.0 684.5L1300.5 680.5L1305.0 684.5L1306.0 684.5L1310.5 680.5L1315.0 684.5L1316.0 684.5L1320.5 680.5L1325.0 684.5L1326.0 684.5L1330.5 680.5L1335.0 684.5L1336.0 684.5L1340.5 680.5L1345.0 684.5L1346.0 684.5L1350.5 680.5L1355.0 684.5L1356.0 684.5L1360.5 680.5L1365.0 684.5L1366.0 684.5L1370.5 680.5" stroke="#505050" stroke-width="1" fill="none"/><path d="M520.5 692.5L527.0 692.5L529.0 689.5L531.0 692.5L537.0 692.5L539.0 689.5L541.0 692.5L547.0 692.5L549.0 689.5L551.0 692.5L557.0 692.5L559.0 689.5L561.0 692.5L567.0 692.5L569.0 689.5L571.0 692.5L577.0 692.5L579.0 689.5L581.0 692.5L587.0 692.5L589.0 689.5L591.0 692.5L597.0 692.5L599.0 689.5L601.0 692.5L607.0 692.5L609.0 689.5L611.0 692.5L617.0 692.5L619.0 689.5L621.0 692.5L627.0 692.5L629.0 689.5L631.0 692.5L637.0 692.5L639.0 689.5L641.0 692.5L647.0 692.5L649.0 689.5L651.0 692.5L657.0 692.5L659.0 689.5L661.0 692.5L667.0 692.5L669.0 689.5L671.0 692.5L677.0 692.5L679.0 689.5L681.0 692.5L687.0 692.5L689.0 689.5L691.0 692.5L697.0 692.5L699.0 689.5L701.0 692.5L707.0 692.5L709.0 689.5L711.0 692.5L717.0 692.5L719.0 689.5L721.0 692.5L727.0 692.5L729.0 689.5L731.0 692.5L737.0 692.5L739.0 689.5L741.0 692.5L747.0 692.5L749.0 689.5L751.0 692.5L757.0 692.5L759.0 689.5L761.0 692.5L767.0 692.5L769.0 689.5L771.0 692.5L777.0 692.5L779.0 689.5L781.0 692.5L787.0 692.5L789.0 689.5L791.0 692.5L797.0 692.5L799.0 689.5L801.0 692.5L807.0 692.5L809.0 689.5L811.0 692.5L817.0 692.5L819.0 689.5L821.0 692.5L827.0 692.5L829.0 689.5L831.0 692.5L837.0 692.5L839.0 689.5L841.0 692.5L847.0 692.5L849.0 689.5L851.0 692.5L857.0 692.5L859.0 689.5L861.0 692.5L867.0 692.5L869.0 689.5L871.0 692.5L877.0 692.5L879.0 689.5L881.0 692.5L887.0 692.5L889.0 689.5L891.0 692.5L897.0 692.5L899.0 689.5L901.0 692.5L907.0 692.5L909.0 689.5L911.0 692.5L917.0 692.5L919.0 689.5L921.0 692.5L927.0 692.5L929.0 689.5L931.0 692.5L937.0 692.5L939.0 689.5L941.0 692.5L947.0 692.5L949.0 689.5L951.0 692.5L957.0 692.5L959.0 689.5L961.0 692.5L967.0 692.5L969.0 689.5L971.0 692.5L977.0 692.5L979.0 689.5L981.0 692.5L987.0 692.5L989.0 689.5L991.0 692.5L997.0 692.5L999.0 689.5L1001.0 692.5L1007.0 692.5L1009.0 689.5L1011.0 692.5L1017.0 692.5L1019.0 689.5L1021.0 692.5L1027.0 692.5L1029.0 689.5L1031.0 692.5L1037.0 692.5L1039.0 689.5L1041.0 692.5L1047.0 692.5L1049.0 689.5L1051.0 692.5L1057.0 692.5L1059.0 689.5L1061.0 692.5L1067.0 692.5L1069.0 689.5L1071.0 692.5L1077.0 692.5L1079.0 689.5L1081.0 692.5L1087.0 692.5L1089.0 689.5L1091.0 692.5L1097.0 692.5L1099.0 689.5L1101.0 692.5L1107.0 692.5L1109.0 689.5L1111.0 692.5L1117.0 692.5L1119.0 689.5L1121.0 692.5L1127.0 692.5L1129.0 689.5L1131.0 692.5L1137.0 692.5L1139.0 689.5L1141.0 692.5L1147.0 692.5L1149.0 689.5L1151.0 692.5L1157.0 692.5L1159.0 689.5L1161.0 692.5L1167.0 692.5L1169.0 689.5L1171.0 692.5L1177.0 692.5L1179.0 689.5L1181.0 692.5L1187.0 692.5L1189.0 689.5L1191.0 692.5L1197.0 692.5L1199.0 689.5L1201.0 692.5L1207.0 692.5L1209.0 689.5L1211.0 692.5L1217.0 692.5L1219.0 689.5L1221.0 692.5L1227.0 692.5L1229.0 689.5L1231.0 692.5L1237.0 692.5L1239.0 689.5L1241.0 692.5L1247.0 692.5L1249.0 689.5L1251.0 692.5L1257.0 692.5L1259.0 689.5L1261.0 692.5L1267.0 692.5L1269.0 689.5L1271.0 692.5L1277.0 692.5L1279.0 689.5L1281.0 692.5L1287.0 692.5L1289.0 689.5L1291.0 692.5L1297.0 692.5L1299.0 689.5L1301.0 692.5L1307.0 692.5L1309.0 689.5L1311.0 692.5L1317.0 692.5L1319.0 689.5L1321.0 692.5L1327.0 692.5L1329.0 689.5L1331.0 692.5L1337.0 692.5L1339.0 689.5L1341.0 692.5L1347.0 692.5L1349.0 689.5L1351.0 692.5L1357.0 692.5L1359.0 689.5L1361.0 692.5L1367.0 692.5L1369.0 689.5L1371.0 692.5" stroke="#606060" stroke-width="1" fill="none" stroke-dasharray="1.5 1.5"/></svg>
<svg style="left:0;top:0" width="1" height="1"><path d="M521 567.5H1370 M521 801.5H1370" stroke="#000080" stroke-width="1" stroke-dasharray="3 2"/><path d="M545.5 556V681 M545.5 689V814 M1345.5 556V681 M1345.5 689V814" stroke="#000080" stroke-width="1" stroke-dasharray="3 2"/></svg>


<div class="a" style="left:1185px;top:842px;width:86px;height:23px;background:#e1e1e1;border:2px solid #0078d7"></div>
<span class="t" style="left:1206px;top:848px">确定<span style="letter-spacing:1.2px;margin-left:1px">(K)</span></span>
<div class="a" style="left:1286px;top:842px;width:86px;height:23px;background:#e1e1e1;border:1px solid #adadad"></div>
<span class="t" style="left:1307px;top:848px">取消<span style="letter-spacing:1.2px;margin-left:1px">(A)</span></span>
</div>

</body></html>
